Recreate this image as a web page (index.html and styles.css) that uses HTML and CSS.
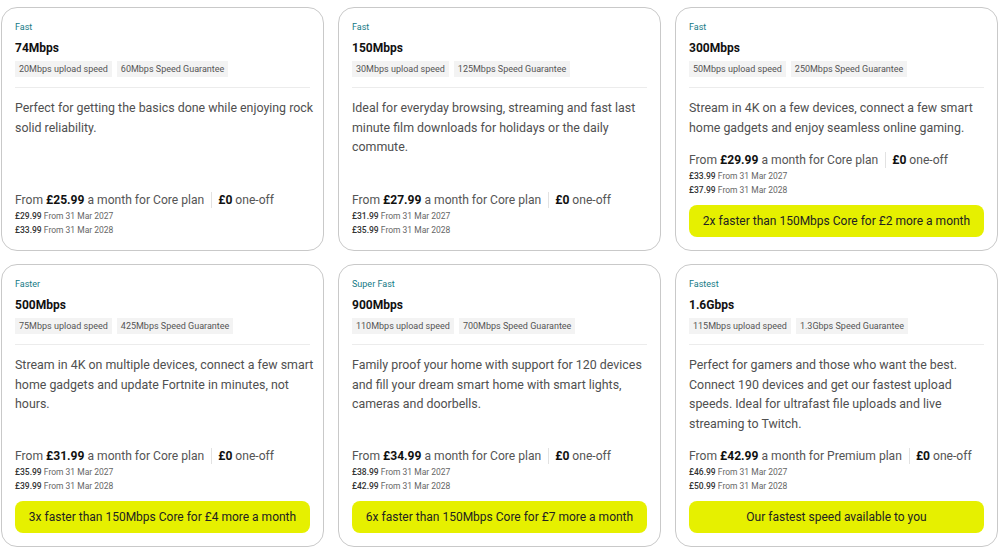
FILE: index.html
```html
<!DOCTYPE html>
<html lang="en">
<head>
<meta charset="utf-8">
<title>Broadband plans</title>
<link rel="stylesheet" href="styles.css">
</head>
<body>
<main class="grid">
  <article class="card">
    <div class="tier">Fast</div>
    <h2 class="speed">74Mbps</h2>
    <div class="tags"><span class="tag">20Mbps upload speed</span><span class="tag">60Mbps Speed Guarantee</span></div>
    <hr class="sep">
    <p class="desc">Perfect for getting the basics done while enjoying rock solid reliability.</p>
    <div class="pricing">
      <div class="price">From <b>£25.99</b> a month for Core plan<span class="divider"></span><b>£0</b> one-off</div>
      <div class="later"><b>£29.99</b> From 31 Mar 2027</div>
      <div class="later"><b>£33.99</b> From 31 Mar 2028</div>
    </div>
  </article>
  <article class="card">
    <div class="tier">Fast</div>
    <h2 class="speed">150Mbps</h2>
    <div class="tags"><span class="tag">30Mbps upload speed</span><span class="tag">125Mbps Speed Guarantee</span></div>
    <hr class="sep">
    <p class="desc">Ideal for everyday browsing, streaming and fast last minute film downloads for holidays or the daily commute.</p>
    <div class="pricing">
      <div class="price">From <b>£27.99</b> a month for Core plan<span class="divider"></span><b>£0</b> one-off</div>
      <div class="later"><b>£31.99</b> From 31 Mar 2027</div>
      <div class="later"><b>£35.99</b> From 31 Mar 2028</div>
    </div>
  </article>
  <article class="card">
    <div class="tier">Fast</div>
    <h2 class="speed">300Mbps</h2>
    <div class="tags"><span class="tag">50Mbps upload speed</span><span class="tag">250Mbps Speed Guarantee</span></div>
    <hr class="sep">
    <p class="desc">Stream in 4K on a few devices, connect a few smart home gadgets and enjoy seamless online gaming.</p>
    <div class="pricing">
      <div class="price">From <b>£29.99</b> a month for Core plan<span class="divider"></span><b>£0</b> one-off</div>
      <div class="later"><b>£33.99</b> From 31 Mar 2027</div>
      <div class="later"><b>£37.99</b> From 31 Mar 2028</div>
    </div>
    <div class="cta">2x faster than 150Mbps Core for £2 more a month</div>
  </article>
  <article class="card">
    <div class="tier">Faster</div>
    <h2 class="speed">500Mbps</h2>
    <div class="tags"><span class="tag">75Mbps upload speed</span><span class="tag">425Mbps Speed Guarantee</span></div>
    <hr class="sep">
    <p class="desc">Stream in 4K on multiple devices, connect a few smart home gadgets and update Fortnite in minutes, not hours.</p>
    <div class="pricing">
      <div class="price">From <b>£31.99</b> a month for Core plan<span class="divider"></span><b>£0</b> one-off</div>
      <div class="later"><b>£35.99</b> From 31 Mar 2027</div>
      <div class="later"><b>£39.99</b> From 31 Mar 2028</div>
    </div>
    <div class="cta">3x faster than 150Mbps Core for £4 more a month</div>
  </article>
  <article class="card">
    <div class="tier">Super Fast</div>
    <h2 class="speed">900Mbps</h2>
    <div class="tags"><span class="tag">110Mbps upload speed</span><span class="tag">700Mbps Speed Guarantee</span></div>
    <hr class="sep">
    <p class="desc">Family proof your home with support for 120 devices and fill your dream smart home with smart lights, cameras and doorbells.</p>
    <div class="pricing">
      <div class="price">From <b>£34.99</b> a month for Core plan<span class="divider"></span><b>£0</b> one-off</div>
      <div class="later"><b>£38.99</b> From 31 Mar 2027</div>
      <div class="later"><b>£42.99</b> From 31 Mar 2028</div>
    </div>
    <div class="cta">6x faster than 150Mbps Core for £7 more a month</div>
  </article>
  <article class="card">
    <div class="tier">Fastest</div>
    <h2 class="speed">1.6Gbps</h2>
    <div class="tags"><span class="tag">115Mbps upload speed</span><span class="tag">1.3Gbps Speed Guarantee</span></div>
    <hr class="sep">
    <p class="desc">Perfect for gamers and those who want the best. Connect 190 devices and get our fastest upload speeds. Ideal for ultrafast file uploads and live streaming to Twitch.</p>
    <div class="pricing">
      <div class="price">From <b>£42.99</b> a month for Premium plan<span class="divider"></span><b>£0</b> one-off</div>
      <div class="later"><b>£46.99</b> From 31 Mar 2027</div>
      <div class="later"><b>£50.99</b> From 31 Mar 2028</div>
    </div>
    <div class="cta">Our fastest speed available to you</div>
  </article>
</main>
</body>
</html>
```
FILE: styles.css
```css
* { box-sizing: border-box; }
html, body { margin: 0; padding: 0; background: #fff; }
body {
  font-family: "Roboto", "Liberation Sans", sans-serif;
  color: #555;
  overflow: hidden;
}
.grid {
  display: grid;
  grid-template-columns: 323px 323px 323px;
  column-gap: 14px;
  row-gap: 13px;
  padding: 7px 0 0 1px;
}
.card {
  display: flex;
  flex-direction: column;
  border: 1px solid #c9c9c9;
  border-radius: 16px;
  padding: 13px 13px 13px 13px;
  background: #fff;
}
.tier {
  font-size: 9px;
  line-height: 12px;
  color: #157a86;
}
.speed {
  margin: 7px 0 0;
  font-size: 12px;
  line-height: 16px;
  font-weight: 700;
  color: #111;
}
.tags {
  display: flex;
  gap: 5px;
  margin-top: 5px;
}
.tag {
  background: #f3f3f3;
  font-size: 9px;
  line-height: 16px;
  padding: 0 4px;
  color: #555;
}
.sep {
  border: 0;
  border-top: 1px solid #ececec;
  margin: 10px 0 0;
}
.desc {
  margin: 10px -9px 0 0;
  font-size: 12.4px;
  line-height: 19.5px;
  color: #505050;
}
.pricing {
  margin-top: auto;
  padding-top: 14px;
}
.price {
  display: flex;
  align-items: center;
  font-size: 12.1px;
  line-height: 18px;
  color: #555;
  white-space: pre;
}
.price b { color: #111; font-weight: 700; }
.divider {
  display: inline-block;
  width: 1px;
  height: 16px;
  background: #e2e2e2;
  margin: 0 6px 0 7px;
}
.later {
  font-size: 8.5px;
  line-height: 14px;
  color: #666;
}
.later b { color: #333; font-weight: 500; }
.cta {
  margin-top: 8px;
  background: #e6f000;
  border-radius: 8px;
  height: 32px;
  display: flex;
  align-items: center;
  justify-content: center;
  font-size: 12px;
  color: #222;
}
```
